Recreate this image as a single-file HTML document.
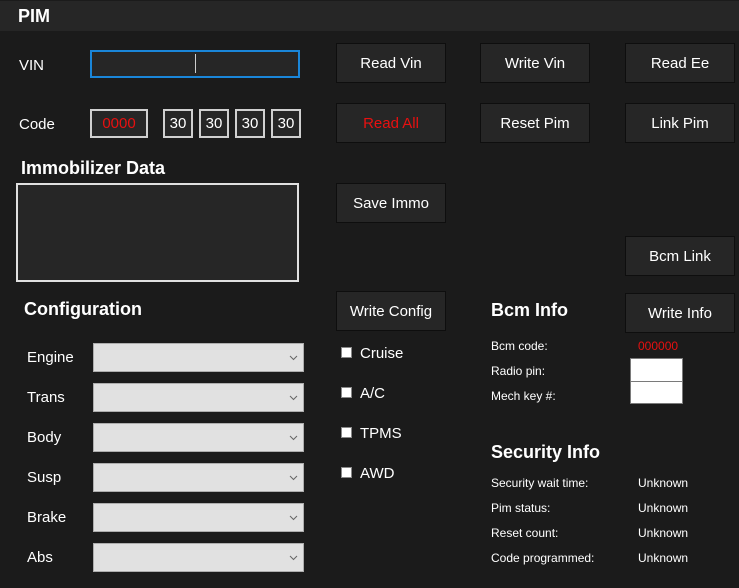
<!DOCTYPE html>
<html><head><style>
body{margin:0;width:739px;height:588px;background:#1b1b1b;font-family:"Liberation Sans",sans-serif;color:#fff;position:relative;overflow:hidden}
.a{position:absolute;white-space:nowrap}
.hdr{left:0;top:1px;width:739px;height:30px;background:#262626}
.btn{position:absolute;width:108px;height:38px;background:#262626;border:1px solid #0e0e0e;color:#fff;font-size:15px;display:flex;align-items:center;justify-content:center}
.lbl{font-size:15px}
.box{position:absolute;border:2px solid #d0d0d0;background:#262626;font-size:15px;display:flex;align-items:center;justify-content:center;box-sizing:border-box}
.sel{position:absolute;left:93px;width:211px;height:29px;background:#e1e1e1;border:1px solid #adadad;box-sizing:border-box}
.sel svg{position:absolute;right:5px;top:11px}
.cb{position:absolute;left:341px;width:11px;height:11px;background:#fff;border:1px solid #888;box-sizing:border-box}
.sm{font-size:12px}
.h{font-weight:bold;font-size:18px}
</style></head><body>
<div class="a hdr"></div>
<div class="a" style="left:18px;top:6px;font-weight:bold;font-size:18px">PIM</div>

<div class="a lbl" style="left:19px;top:57px">VIN</div>
<div class="a" style="left:90px;top:50px;width:210px;height:28px;border:2px solid #1a86d9;background:#262626;box-sizing:border-box"></div>
<div class="a" style="left:195px;top:54px;width:1px;height:19px;background:#ccc"></div>

<div class="a lbl" style="left:19px;top:116px">Code</div>
<div class="box" style="left:90px;top:109px;width:58px;height:29px;color:#e81010">0000</div>
<div class="box" style="left:163px;top:109px;width:30px;height:29px">30</div>
<div class="box" style="left:199px;top:109px;width:30px;height:29px">30</div>
<div class="box" style="left:235px;top:109px;width:30px;height:29px">30</div>
<div class="box" style="left:271px;top:109px;width:30px;height:29px">30</div>

<div class="a h" style="left:21px;top:158px">Immobilizer Data</div>
<div class="a" style="left:16px;top:183px;width:283px;height:99px;border:2px solid #e0e0e0;background:#262626;box-sizing:border-box"></div>

<div class="btn" style="left:336px;top:43px">Read Vin</div>
<div class="btn" style="left:480px;top:43px">Write Vin</div>
<div class="btn" style="left:625px;top:43px">Read Ee</div>
<div class="btn" style="left:336px;top:103px;color:#e81010">Read All</div>
<div class="btn" style="left:480px;top:103px">Reset Pim</div>
<div class="btn" style="left:625px;top:103px">Link Pim</div>
<div class="btn" style="left:336px;top:183px">Save Immo</div>
<div class="btn" style="left:625px;top:236px">Bcm Link</div>
<div class="btn" style="left:336px;top:291px">Write Config</div>
<div class="btn" style="left:625px;top:293px">Write Info</div>

<div class="a h" style="left:24px;top:299px">Configuration</div>
<div class="a lbl" style="left:27px;top:349px">Engine</div>
<div class="a lbl" style="left:27px;top:389px">Trans</div>
<div class="a lbl" style="left:27px;top:429px">Body</div>
<div class="a lbl" style="left:27px;top:469px">Susp</div>
<div class="a lbl" style="left:27px;top:509px">Brake</div>
<div class="a lbl" style="left:27px;top:549px">Abs</div>
<div class="sel" style="top:343px"><svg width="9" height="6"><path d="M1 1L4.5 4.5L8 1" stroke="#666" fill="none"/></svg></div>
<div class="sel" style="top:383px"><svg width="9" height="6"><path d="M1 1L4.5 4.5L8 1" stroke="#666" fill="none"/></svg></div>
<div class="sel" style="top:423px"><svg width="9" height="6"><path d="M1 1L4.5 4.5L8 1" stroke="#666" fill="none"/></svg></div>
<div class="sel" style="top:463px"><svg width="9" height="6"><path d="M1 1L4.5 4.5L8 1" stroke="#666" fill="none"/></svg></div>
<div class="sel" style="top:503px"><svg width="9" height="6"><path d="M1 1L4.5 4.5L8 1" stroke="#666" fill="none"/></svg></div>
<div class="sel" style="top:543px"><svg width="9" height="6"><path d="M1 1L4.5 4.5L8 1" stroke="#666" fill="none"/></svg></div>

<div class="cb" style="top:347px"></div><div class="a lbl" style="left:360px;top:345px">Cruise</div>
<div class="cb" style="top:387px"></div><div class="a lbl" style="left:360px;top:385px">A/C</div>
<div class="cb" style="top:427px"></div><div class="a lbl" style="left:360px;top:425px">TPMS</div>
<div class="cb" style="top:467px"></div><div class="a lbl" style="left:360px;top:465px">AWD</div>

<div class="a h" style="left:491px;top:300px">Bcm Info</div>
<div class="a sm" style="left:491px;top:339px">Bcm code:</div>
<div class="a sm" style="left:638px;top:339px;color:#e81010">000000</div>
<div class="a sm" style="left:491px;top:364px">Radio pin:</div>
<div class="a sm" style="left:491px;top:389px">Mech key #:</div>
<div class="a" style="left:630px;top:358px;width:53px;height:24px;background:#fff;border:1px solid #7a7a7a;box-sizing:border-box"></div>
<div class="a" style="left:630px;top:381px;width:53px;height:23px;background:#fff;border:1px solid #7a7a7a;box-sizing:border-box"></div>

<div class="a h" style="left:491px;top:442px">Security Info</div>
<div class="a sm" style="left:491px;top:476px">Security wait time:</div>
<div class="a sm" style="left:638px;top:476px">Unknown</div>
<div class="a sm" style="left:491px;top:501px">Pim status:</div>
<div class="a sm" style="left:638px;top:501px">Unknown</div>
<div class="a sm" style="left:491px;top:526px">Reset count:</div>
<div class="a sm" style="left:638px;top:526px">Unknown</div>
<div class="a sm" style="left:491px;top:551px">Code programmed:</div>
<div class="a sm" style="left:638px;top:551px">Unknown</div>
</body></html>
